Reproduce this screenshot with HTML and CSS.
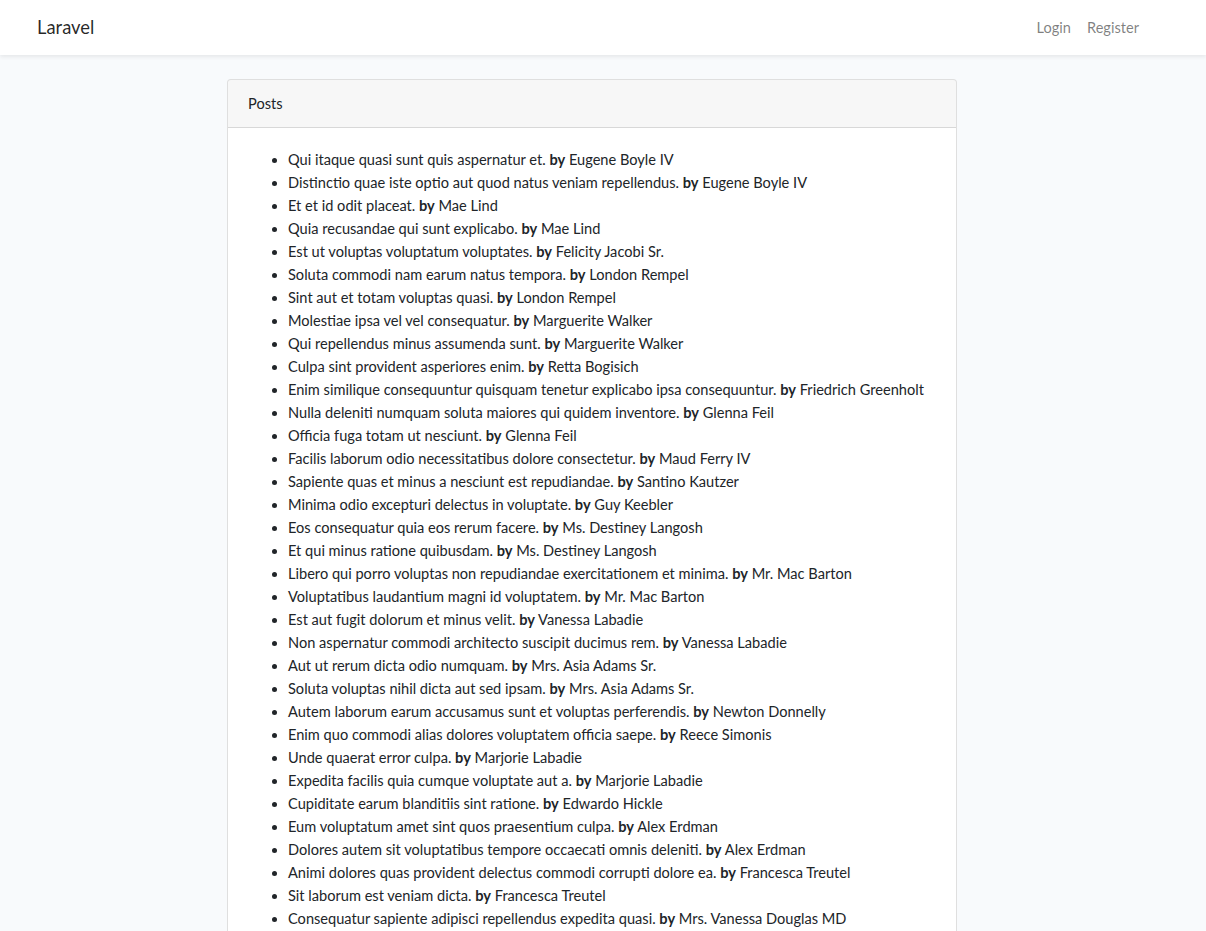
FILE: index.html
```html
<!DOCTYPE html>
<html lang="en">
<head>
<meta charset="utf-8">
<title>Laravel</title>
<link rel="stylesheet" href="styles.css">
</head>
<body>
<nav class="navbar">
  <div class="container nav-inner">
    <a class="brand" href="#">Laravel</a>
    <ul class="nav-links">
      <li><a href="#">Login</a></li>
      <li><a href="#">Register</a></li>
    </ul>
  </div>
</nav>
<main class="main">
  <div class="card">
    <div class="card-header">Posts</div>
    <div class="card-body">
      <ul class="posts">
        <li>Qui itaque quasi sunt quis aspernatur et. <b>by</b> Eugene Boyle IV</li>
        <li>Distinctio quae iste optio aut quod natus veniam repellendus. <b>by</b> Eugene Boyle IV</li>
        <li>Et et id odit placeat. <b>by</b> Mae Lind</li>
        <li>Quia recusandae qui sunt explicabo. <b>by</b> Mae Lind</li>
        <li>Est ut voluptas voluptatum voluptates. <b>by</b> Felicity Jacobi Sr.</li>
        <li>Soluta commodi nam earum natus tempora. <b>by</b> London Rempel</li>
        <li>Sint aut et totam voluptas quasi. <b>by</b> London Rempel</li>
        <li>Molestiae ipsa vel vel consequatur. <b>by</b> Marguerite Walker</li>
        <li>Qui repellendus minus assumenda sunt. <b>by</b> Marguerite Walker</li>
        <li>Culpa sint provident asperiores enim. <b>by</b> Retta Bogisich</li>
        <li>Enim similique consequuntur quisquam tenetur explicabo ipsa consequuntur. <b>by</b> Friedrich Greenholt</li>
        <li>Nulla deleniti numquam soluta maiores qui quidem inventore. <b>by</b> Glenna Feil</li>
        <li>Officia fuga totam ut nesciunt. <b>by</b> Glenna Feil</li>
        <li>Facilis laborum odio necessitatibus dolore consectetur. <b>by</b> Maud Ferry IV</li>
        <li>Sapiente quas et minus a nesciunt est repudiandae. <b>by</b> Santino Kautzer</li>
        <li>Minima odio excepturi delectus in voluptate. <b>by</b> Guy Keebler</li>
        <li>Eos consequatur quia eos rerum facere. <b>by</b> Ms. Destiney Langosh</li>
        <li>Et qui minus ratione quibusdam. <b>by</b> Ms. Destiney Langosh</li>
        <li>Libero qui porro voluptas non repudiandae exercitationem et minima. <b>by</b> Mr. Mac Barton</li>
        <li>Voluptatibus laudantium magni id voluptatem. <b>by</b> Mr. Mac Barton</li>
        <li>Est aut fugit dolorum et minus velit. <b>by</b> Vanessa Labadie</li>
        <li>Non aspernatur commodi architecto suscipit ducimus rem. <b>by</b> Vanessa Labadie</li>
        <li>Aut ut rerum dicta odio numquam. <b>by</b> Mrs. Asia Adams Sr.</li>
        <li>Soluta voluptas nihil dicta aut sed ipsam. <b>by</b> Mrs. Asia Adams Sr.</li>
        <li>Autem laborum earum accusamus sunt et voluptas perferendis. <b>by</b> Newton Donnelly</li>
        <li>Enim quo commodi alias dolores voluptatem officia saepe. <b>by</b> Reece Simonis</li>
        <li>Unde quaerat error culpa. <b>by</b> Marjorie Labadie</li>
        <li>Expedita facilis quia cumque voluptate aut a. <b>by</b> Marjorie Labadie</li>
        <li>Cupiditate earum blanditiis sint ratione. <b>by</b> Edwardo Hickle</li>
        <li>Eum voluptatum amet sint quos praesentium culpa. <b>by</b> Alex Erdman</li>
        <li>Dolores autem sit voluptatibus tempore occaecati omnis deleniti. <b>by</b> Alex Erdman</li>
        <li>Animi dolores quas provident delectus commodi corrupti dolore ea. <b>by</b> Francesca Treutel</li>
        <li>Sit laborum est veniam dicta. <b>by</b> Francesca Treutel</li>
        <li>Consequatur sapiente adipisci repellendus expedita quasi. <b>by</b> Mrs. Vanessa Douglas MD</li>
      </ul>
    </div>
  </div>
</main>
</body>
</html>
```

FILE: styles.css
```css
html, body {
  margin: 0;
  padding: 0;
}
body {
  font-family: Lato, "Noto Sans", sans-serif;
  font-size: 14.6px;
  line-height: 23px;
  color: #212529;
  background: #f8fafc;
}
a {
  text-decoration: none;
}
.navbar {
  background: #fff;
  box-shadow: 0 2px 4px rgba(0, 0, 0, 0.075);
  padding: 8px 0;
  position: relative;
}
.container {
  width: 1110px;
  margin-left: 37px;
}
.nav-inner {
  display: flex;
  justify-content: space-between;
  align-items: center;
  height: 39px;
}
.brand {
  color: rgba(0, 0, 0, 0.85);
  font-size: 18.4px;
  line-height: 27px;
}
.nav-links {
  list-style: none;
  display: flex;
  margin: 0;
  padding: 0;
}
.nav-links a {
  display: block;
  padding: 8px 8px;
  color: rgba(0, 0, 0, 0.5);
}
.main {
  padding: 24px 0;
}
.card {
  width: 728px;
  margin-left: 227px;
  background: #fff;
  border: 1px solid rgba(0, 0, 0, 0.125);
  border-radius: 4px;
}
.card-header {
  padding: 12px 20px;
  background: rgba(0, 0, 0, 0.03);
  border-bottom: 1px solid rgba(0, 0, 0, 0.125);
  border-radius: 3px 3px 0 0;
}
.card-body {
  padding: 20px;
}
.posts {
  margin: 0 0 16px;
  padding-left: 40px;
}
.posts b {
  font-weight: 700;
}
```
